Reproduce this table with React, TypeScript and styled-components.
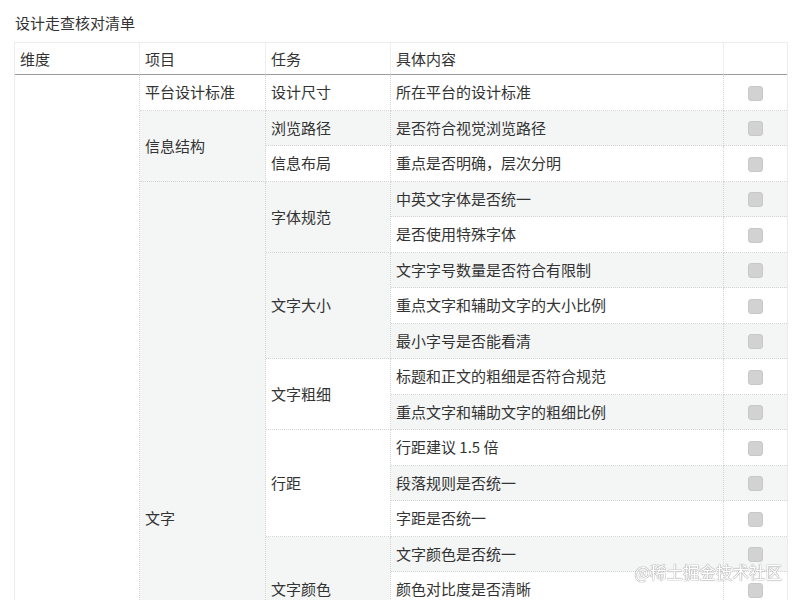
import React from "react";
import styled, { createGlobalStyle } from "styled-components";

const GlobalStyle = createGlobalStyle`
  html, body {
    margin: 0;
    padding: 0;
    background: #ffffff;
  }
  body {
    font-family: "Noto Sans CJK SC", "Noto Sans", sans-serif;
    color: #333333;
  }
`;

const Page = styled.div`
  padding: 12px 14px 40px;
`;

const Title = styled.h3`
  margin: 0 0 9px 1px;
  font-size: 15px;
  line-height: 21px;
  font-weight: 400;
  color: #333333;
`;

const Grid = styled.div`
  display: grid;
  grid-template-columns: 125px 126px 125px 333px 63px;
  grid-template-rows: 32px;
  grid-auto-rows: 35.5px;
  width: 772px;
  border: 1px solid #ececec;
  border-bottom: none;
`;

const HeadCell = styled.div<{ $last?: boolean }>`
  box-sizing: border-box;
  display: flex;
  align-items: center;
  padding: 0 5px;
  font-size: 15px;
  color: #333333;
  border-bottom: 1px solid #9c9c9c;
  border-right: ${(p) => (p.$last ? "none" : "1px solid #eeeeee")};
`;

const Cell = styled.div<{ $span?: number; $alt?: boolean; $last?: boolean }>`
  box-sizing: border-box;
  grid-row: span ${(p) => p.$span ?? 1};
  display: flex;
  align-items: center;
  padding: 0 5px;
  font-size: 15px;
  line-height: 20px;
  color: #333333;
  white-space: nowrap;
  background: ${(p) => (p.$alt ? "#f4f6f6" : "#ffffff")};
  border-bottom: 1px dotted #d4d4d4;
  border-right: ${(p) => (p.$last ? "none" : "1px dotted #d4d4d4")};
`;

const CheckCell = styled(Cell)`
  justify-content: center;
  padding: 0;
`;

const Check = styled.input.attrs({ type: "checkbox" })`
  appearance: none;
  -webkit-appearance: none;
  margin: 2px 0 0 0;
  width: 15px;
  height: 15px;
  border-radius: 3px;
  background: #d2d2d2;
  border: 1px solid #c8c8c8;
  box-sizing: border-box;
`;

const Watermark = styled.div`
  position: fixed;
  right: 18px;
  bottom: 18px;
  font-family: "Noto Sans CJK SC", sans-serif;
  font-size: 16.5px;
  line-height: 20px;
  color: #ffffff;
  text-shadow: 0 0 1px #9a9a9a, 0 0 1px #9a9a9a, 0 0 1px #b0b0b0;
  pointer-events: none;
  white-space: nowrap;
`;

type Task = { name: string; contents: string[] };
type Item = { name: string; tasks: Task[] };
type Dim = { name: string; items: Item[] };

const data: Dim[] = [
  {
    name: "视觉规范",
    items: [
      { name: "平台设计标准", tasks: [{ name: "设计尺寸", contents: ["所在平台的设计标准"] }] },
      {
        name: "信息结构",
        tasks: [
          { name: "浏览路径", contents: ["是否符合视觉浏览路径"] },
          { name: "信息布局", contents: ["重点是否明确，层次分明"] },
        ],
      },
      {
        name: "文字",
        tasks: [
          { name: "字体规范", contents: ["中英文字体是否统一", "是否使用特殊字体"] },
          {
            name: "文字大小",
            contents: ["文字字号数量是否符合有限制", "重点文字和辅助文字的大小比例", "最小字号是否能看清"],
          },
          { name: "文字粗细", contents: ["标题和正文的粗细是否符合规范", "重点文字和辅助文字的粗细比例"] },
          { name: "行距", contents: ["行距建议 1.5 倍", "段落规则是否统一", "字距是否统一"] },
          { name: "文字颜色", contents: ["文字颜色是否统一", "颜色对比度是否清晰", "链接文字颜色是否一致"] },
          { name: "文字对齐", contents: ["对齐方式是否统一", "标点是否避头尾", "数字与单位是否统一"] },
          { name: "文案", contents: ["文案是否有错别字", "中英文之间是否有空格", "文案语气是否统一"] },
        ],
      },
      {
        name: "图标",
        tasks: [{ name: "图标规范", contents: ["图标风格是否统一", "图标尺寸是否规范", "图标是否清晰"] }],
      },
      {
        name: "颜色",
        tasks: [{ name: "色彩规范", contents: ["主色是否统一", "辅助色使用是否合理", "是否符合品牌色"] }],
      },
      {
        name: "间距",
        tasks: [{ name: "间距规范", contents: ["模块间距是否统一", "内边距是否统一", "是否符合栅格"] }],
      },
    ],
  },
];

const countItem = (it: Item) => it.tasks.reduce((n, t) => n + t.contents.length, 0);
const countDim = (d: Dim) => d.items.reduce((n, it) => n + countItem(it), 0);

function renderRows() {
  const out: React.ReactNode[] = [];
  let row = 0;
  data.forEach((dim, di) => {
    dim.items.forEach((item, ii) => {
      item.tasks.forEach((task, ti) => {
        task.contents.forEach((content, ci) => {
          const alt = row % 2 === 1;
          if (ii === 0 && ti === 0 && ci === 0) {
            out.push(
              <Cell key={`d${di}`} $span={countDim(dim)} $alt={alt}>
                {dim.name}
              </Cell>
            );
          }
          if (ti === 0 && ci === 0) {
            out.push(
              <Cell key={`i${di}-${ii}`} $span={countItem(item)} $alt={alt}>
                {item.name}
              </Cell>
            );
          }
          if (ci === 0) {
            out.push(
              <Cell key={`t${di}-${ii}-${ti}`} $span={task.contents.length} $alt={alt}>
                {task.name}
              </Cell>
            );
          }
          out.push(
            <Cell key={`c${row}`} $alt={alt}>
              {content}
            </Cell>
          );
          out.push(
            <CheckCell key={`k${row}`} $alt={alt} $last>
              <Check aria-label={content} />
            </CheckCell>
          );
          row += 1;
        });
      });
    });
  });
  return out;
}

export default function App() {
  return (
    <Page>
      <GlobalStyle />
      <Title>设计走查核对清单</Title>
      <Grid>
        <HeadCell>维度</HeadCell>
        <HeadCell>项目</HeadCell>
        <HeadCell>任务</HeadCell>
        <HeadCell>具体内容</HeadCell>
        <HeadCell $last />
        {renderRows()}
      </Grid>
      <Watermark>@稀土掘金技术社区</Watermark>
    </Page>
  );
}
